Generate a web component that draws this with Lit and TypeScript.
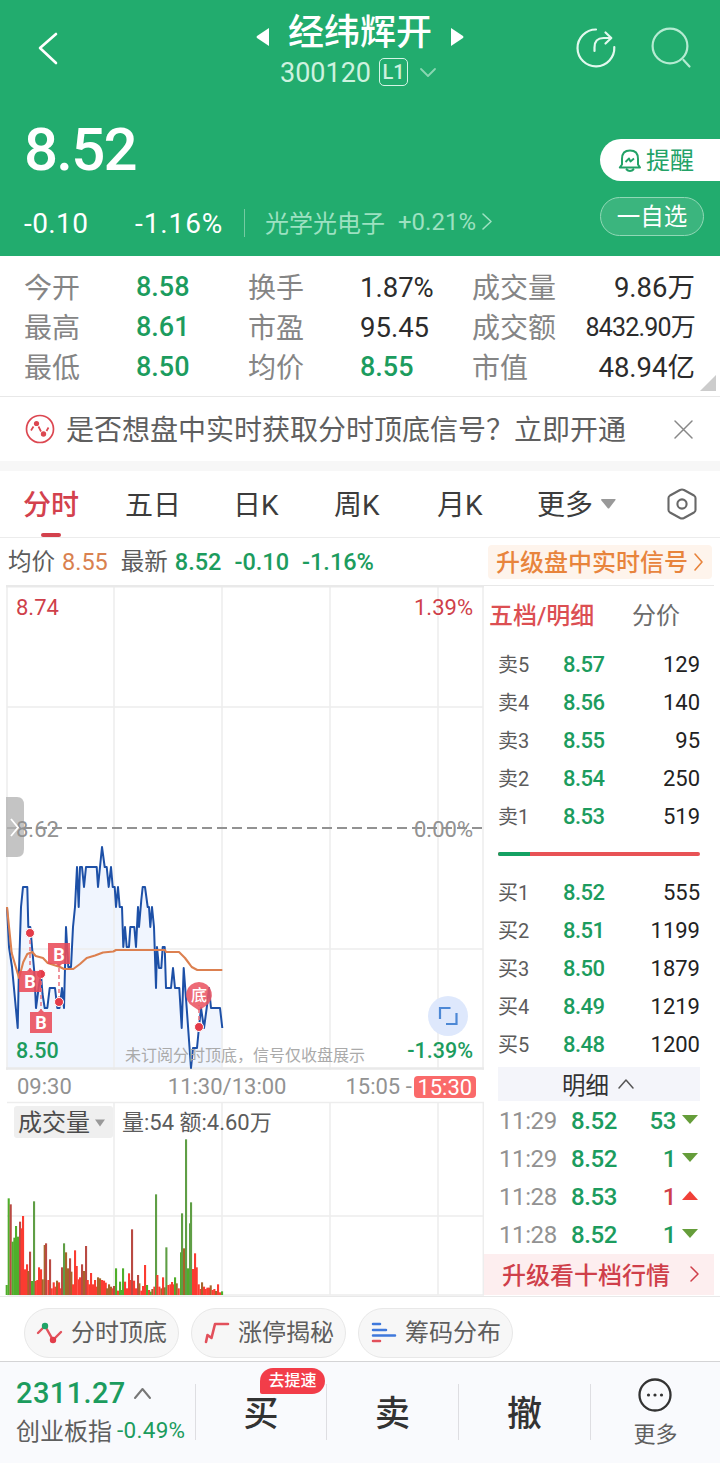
import { LitElement, html, svg, css } from "lit";
import { customElement } from "lit/decorators.js";

const GREEN = "#1c9c5e";
const RED = "#cf3f4a";

const STATS = [
  ["今开", "8.58", "up", "换手", "1.87%", "", "成交量", "9.86万", ""],
  ["最高", "8.61", "up", "市盈", "95.45", "", "成交额", "8432.90万", "tight"],
  ["最低", "8.50", "up", "均价", "8.55", "up", "市值", "48.94亿", ""],
];
const SELLS = [["卖5", "8.57", "129"], ["卖4", "8.56", "140"], ["卖3", "8.55", "95"], ["卖2", "8.54", "250"], ["卖1", "8.53", "519"]];
const BUYS = [["买1", "8.52", "555"], ["买2", "8.51", "1199"], ["买3", "8.50", "1879"], ["买4", "8.49", "1219"], ["买5", "8.48", "1200"]];
const TRADES = [["11:29", "8.52", "53", "down"], ["11:29", "8.52", "1", "down"], ["11:28", "8.53", "1", "rise"], ["11:28", "8.52", "1", "down"]];

const PRICE =
  "7,907 9,947 12,967 17.7,1028 18.7,980 21,907 23,887 27.3,887 28.3,927 30.3,927 32,947 34.3,972 36,1008 39,985 41,974 42.5,994 44.7,1008 47.3,1008 49.7,988 55,988 57.3,1008 59.5,1008 62,988 64,1008 66,927 68.3,967 71,967 73,927 75,907 77,867 78.7,907 80,867 82,867 84,887 86,867 96.7,867 98,887 100,867 102,847 104.7,867 106.7,867 108.7,887 111,867 112.7,887 114.7,887 116,907 118,887 119.7,907 122,907 123.3,947 125,927 126.7,947 129,947 130.3,927 134.3,927 136,947 138,907 139,927 141.3,900 142.7,887 145,887 147.7,907 149,907 150.3,927 152,907 154,927 156,988 157,947 159,968 161.3,968 162.7,947 164.7,947 166,988 171,988 173,968 175,988 179.3,988 181.7,1028 183.7,968 186.7,1008 191,1068 193,1048 197,1048 199,1027 201,1008 204,1028 206.7,1008 209,988 211,1008 220,1008 222.3,1028";
const AVERAGE =
  "7,907 11.7,953 19,978 23.3,962 27.3,954 32.3,952 35.7,956 43,958 47.7,963 60,967 64,969 73.3,969 80,964 86.7,958 95,955.5 103,952.5 113.3,951.5 116,950 165,950 166,952 179,952 185,958 188,962 191.7,967 197.3,970 222.3,970";

// [offset, bar height, colour key], in thirds of a pixel
const VOLUME: [number, number, string][] = (
  "20,30g 26,290g 32,272m 38,160g 43,172g 48,207g 54,175g 60,220m 65,200r 69,237r 75,77r 81,92r 85,72b 90,130m 96,42g 102,281g 107,42r 112,45r 117,83r 123,77r 128,47b 134,150b 138,155m 145,45r 150,107m 155,20r 161,38r 166,25r 171,43b 177,38r 182,20r 186,83m 192,155g 198,128b 204,80b 210,110m 214,70b 219,32r 225,134r 230,87r 236,47r 240,53r 246,92m 252,72b 258,147m 263,45r 268,32r 273,66r 279,32r 285,45r 290,25r 294,53b 300,50b 306,45r 312,43r 317,37r 321,20b 327,32b 333,25b 338,20r 342,27m 348,80g 354,13r 360,40g 364,15g 369,80g 375,40r 381,20r 387,65r 391,45r 396,197m 402,43r 408,20r 414,60m 418,35b 424,13r 429,27r 435,90r 441,30g 447,15r 452,10g 457,18b 463,25r 468,302g 472,60r 478,25r 484,20b 489,53r 494,23b 499,143g 505,30r 511,32r 516,39r 521,32r 525,53g 530,35b 536,20r 543,128g 546,245g 552,140b 558,467g 564,80g 570,215g 573,278g 579,78r 585,125r 590,83r 596,32r 602,18r 606,38b 612,25r 617,18r 622,22r 627,22r 632,29b 638,15r 643,18r 648,12b 654,32r 660,8r 666,11g"
).split(" ").map((s) => {
  const [x, rest] = s.split(",");
  return [Number(x), parseInt(rest, 10), rest.slice(-1)];
});
const BAR: Record<string, string> = { g: "#4fae2b", r: "#fb3b31", m: "#b94a43", b: "#a5652a" };

const signal = (x: number, y: number, tipUp: boolean) => svg`
  <path d=${tipUp ? `M${x - 11} ${y - 10}h8l3 -3l3 3h8v21h-22z` : `M${x - 11} ${y - 11}h22v21h-8l-3 3l-3 -3h-8z`} fill="#e94b59" fill-opacity=".88"/>
  <text x=${x} y=${y + 7} class="badge">B</text>`;

@customElement("app-root")
export class AppRoot extends LitElement {
  static styles = css`
    :host {
      display: block; width: 720px; height: 1463px; overflow: hidden; background: #fff; color: #333;
      font-family: Roboto, "Noto Sans CJK SC", sans-serif; white-space: nowrap;
    }
    * { box-sizing: border-box; }
    svg { display: block; flex: none; overflow: visible; }
    .row { display: flex; align-items: center; }
    .up, .down { color: #1c9c5e; }
    .rise { color: #cf3f4a; }
    header { height: 256px; background: #22ac6e; color: #fff; }
    .top { display: grid; grid-template-columns: 200px 320px 200px; height: 96px; }
    .back { padding: 32px 0 0 37px; }
    .title { display: flex; flex-direction: column; align-items: center; padding-top: 8px; }
    .name { gap: 18px; font-size: 36px; font-weight: 500; line-height: 50px; height: 48px; }
    .name span { padding-top: 2px; }
    .name svg { margin-top: 9px; }
    .code { height: 34px; font-size: 27px; color: #cdf2df; padding-right: 4px; margin-top: -1px; }
    .code > span:first-child { padding-top: 2px; }
    .level { width: 29px; height: 28px; border: 1.5px solid #d5f5e5; border-radius: 5px; font-size: 20px; font-weight: 500; line-height: 26px; text-align: center; margin: 0 12px 0 8px; }
    .icons { display: flex; gap: 35px; padding: 27px 0 0 56px; }
    .mid { display: flex; justify-content: space-between; height: 100px; }
    .price { font-size: 60px; font-weight: 500; line-height: 72px; padding: 18px 0 0 24px; letter-spacing: -1.8px; }
    .remind { width: 120px; height: 42px; margin-top: 43px; background: #fff; color: #22a267; border-radius: 21px 0 0 21px; font-size: 24px; padding-left: 18px; gap: 4px; }
    .remind span { margin-top: -3px; }
    .low { height: 54px; font-size: 28px; }
    .low .chg { width: 111px; padding-left: 24px; letter-spacing: .4px; }
    .low .pct { width: 109px; padding-left: 24px; letter-spacing: .9px; }
    .sep { width: 1px; height: 28px; background: #74cba2; margin-left: 24px; }
    .sector { font-size: 24px; color: #9de1c1; margin: -4px 0 0 20px; width: 228px; gap: 6px; }
    .sector b { font-weight: 400; margin: 2px 0 0 7px; }
    .watch { width: 104px; height: 39px; margin: -13px 0 0 107px; border: 1.5px solid #91d8b6; border-radius: 20px; background: #3bb57e; font-size: 23.5px; justify-content: center; padding-bottom: 3px; }
    .stats { height: 140px; padding: 12px 25px 8px 24px; position: relative; }
    .stat { display: grid; grid-template-columns: 112px 112px 112px 112px 83px 140px; height: 40px; line-height: 41px; font-size: 28px; }
    .stat i { font-style: normal; color: #858585; }
    .stat span { font-size: 27.5px; line-height: 39px; color: #2c2c2c; }
    .stat span.up { color: #1c9c5e; font-weight: 500; font-size: 27px; }
    .stat span:last-child { text-align: right; }
    .stat span.tight { font-size: 25px; letter-spacing: -.8px; }
    .fold { position: absolute; right: 4px; bottom: 5px; }
    .notice { height: 65px; border-top: 1.5px solid #e8e8e8; padding: 0 27px 0 25px; font-size: 28px; color: #5f5f5f; }
    .notice span { margin: -2px auto 0 11px; }
    .gap { height: 10px; background: #f7f7f7; }
    .tabs { height: 67px; border-bottom: 1.5px solid #ececec; font-size: 28px; color: #3c3c3c; position: relative; }
    .tabs span { line-height: 66px; padding-top: 3px; }
    .tabs .on { color: #d3414d; font-weight: 500; width: 102px; margin-left: 23px; }
    .tabs .on::after { content: ""; position: absolute; left: 41px; bottom: 0; width: 20px; height: 4px; border-radius: 2px; background: #d3414d; }
    .w108 { width: 108px; } .w101 { width: 101px; } .w103 { width: 103px; } .w100 { width: 100px; }
    .caret { margin: 0 51px 0 8px; }
    .quote { height: 47px; font-size: 23.5px; color: #5c5c5c; padding: 0 8px 0 8px; }
    .quote span { margin-right: 13px; font-weight: 500; }
    .quote .avg { color: #d98150; font-weight: 400; }
    .quote em { font-style: normal; margin: -3px 7px 0 0; }
    .promo { margin-left: auto; width: 224px; height: 34px; background: #fef4ec; border-radius: 4px; color: #e8843c; font-size: 24px; font-weight: 500; gap: 6px; padding: 0 0 3px 8px; }
    .promo svg { margin-top: 3px; }
    .main { display: grid; grid-template-columns: 484px 236px; height: 711px; }
    .axis { height: 30px; font-size: 22px; color: #929292; padding: 0 0 1px 17px; }
    .axis .b { margin-left: 96px; }
    .axis .c { margin-left: 59px; }
    .axis .d { background: #fa6a6a; color: #fff; border-radius: 4px; height: 22px; line-height: 23px; width: 62px; text-align: center; margin-left: 2px; }
    svg text { font-size: 22px; font-family: Roboto, "Noto Sans CJK SC", sans-serif; }
    svg .green { font-size: 21.5px; font-weight: 500; }
    svg .badge { font-size: 18px; font-weight: 700; fill: #fff; text-anchor: middle; }
    svg .bottom { font-size: 16px; font-weight: 500; fill: #fff; text-anchor: middle; }
    svg .watermark { font-size: 16px; fill: #aaa; }
    svg .kind { font-size: 24px; fill: #4c4c4c; }
    .book { border-top: 1.5px solid #e8e8e8; width: 230px; }
    .head { height: 60px; font-size: 24px; padding: 0 0 5px 5px; color: #6c6c6c; }
    .head b { color: #dc4f52; font-weight: 500; width: 143px; }
    .level-row { display: grid; grid-template-columns: 65px 70px 67px; height: 38px; line-height: 38px; padding-left: 14px; font-size: 22px; }
    .level-row span { font-weight: 500; letter-spacing: -.5px; }
    .level-row i { font-style: normal; font-size: 20px; color: #5c5c5c; }
    .level-row em { font-style: normal; text-align: right; color: #222; }
    .ratio { display: flex; width: 202px; height: 4px; margin: 16px 0 18px 14px; border-radius: 2px; overflow: hidden; background: #e85255; }
    .ratio div { width: 32px; background: #14a163; }
    .detail { width: 202px; height: 34px; margin: 3px 0 1px 14px; background: #f4f5fa; font-size: 23.5px; justify-content: center; gap: 9px; padding: 0 2px 0 0; }
    .trade { display: grid; grid-template-columns: 72px 56px 49px 16px; height: 38px; line-height: 38px; align-items: center; padding-left: 15px; font-size: 24px; }
    .trade span, .trade em { font-weight: 500; letter-spacing: -.4px; }
    .trade i { font-style: normal; color: #929292; letter-spacing: -.4px; }
    .trade em { font-style: normal; text-align: right; }
    .trade svg { margin: -4px 0 0 6px; }
    .ten { height: 41px; background: #fdeeef; color: #cf3f4a; font-size: 24px; font-weight: 500; padding: 0 0 2px 18px; gap: 20px; }
    .chips { height: 65px; border-top: 1.5px solid #e9e9e9; padding: 11px 0 2px 24px; gap: 12px; align-items: flex-start; }
    .chip { width: 155px; height: 50px; border: 1.5px solid #e8e8e8; border-radius: 25px; background: #f7f7f7; font-size: 24px; color: #5e5e5e; padding-left: 11px; gap: 8px; }
    .chip span { margin-top: -5px; }
    .dock { height: 102px; background: #f9fafd; border-top: 1.5px solid #d4d4d6; display: grid; grid-template-columns: 195px 131px 132px 132px 130px; align-items: start; }
    .index { padding: 12px 0 0 16px; font-size: 24px; color: #5f5f5f; }
    .index .row:first-child { height: 38px; font-size: 29px; font-weight: 500; gap: 8px; letter-spacing: .4px; }
    .index .row:last-child { height: 34px; }
    .index b { font-weight: 400; font-size: 22.5px; color: #1c9c5e; margin: 2px 0 0 5px; letter-spacing: .3px; }
    .act { position: relative; height: 56px; margin-top: 22px; border-left: 1.5px solid #dedee2; text-align: center; font-size: 35px; font-weight: 500; line-height: 61px; }
    .tag { position: absolute; left: 64px; top: -16px; width: 65px; height: 26px; border-radius: 13px 13px 13px 2px; background: #f23d49; color: #fff; font-size: 16px; line-height: 25px; }
    .more { height: 56px; margin-top: 22px; border-left: 1.5px solid #dedee2; display: flex; justify-content: center; }
    .more div { margin-top: -6px; display: flex; flex-direction: column; align-items: center; font-size: 22px; color: #5f5f5f; line-height: 34px; gap: 6px; }
  `;

  chevron(d: string, color: string, w: number, h: number, sw = 1.6) {
    return html`<svg width=${w} height=${h} viewBox="0 0 ${w} ${h}"><path d=${d} fill="none" stroke=${color} stroke-width=${sw} stroke-linecap="round" stroke-linejoin="round" /></svg>`;
  }

  header() {
    return html`<header>
      <div class="top">
        <div class="back">${this.chevron("M19 2L3 16L19 31", "#fff", 22, 33, 2.6)}</div>
        <div class="title">
          <div class="row name">
            <svg width="14" height="18" viewBox="0 0 14 18"><path d="M13 0V18L1 10Q0 9 1 8Z" fill="#fff" /></svg>
            <span>经纬辉开</span>
            <svg width="14" height="18" viewBox="0 0 14 18"><path d="M1 0V18L13 10Q14 9 13 8Z" fill="#fff" /></svg>
          </div>
          <div class="row code"><span>300120</span><span class="level">L1</span>${this.chevron("M1 1L8 8L15 1", "#8ad6b2", 16, 9, 1.8)}</div>
        </div>
        <div class="icons">
          <svg width="41" height="42" viewBox="0 0 41 42" fill="none" stroke="#e2f9ee" stroke-width="2.2" stroke-linecap="round" stroke-linejoin="round">
            <path d="M20 2.5A18.4 18.4 0 1 0 38.3 20" />
            <path d="M18.5 24V20.5Q18.5 11 27.5 11H34.5M29.5 5.5L35.3 11L29.5 16.5" />
          </svg>
          <svg width="42" height="42" viewBox="0 0 42 42" fill="none" stroke="#b5ebd2" stroke-width="2.2" stroke-linecap="round">
            <circle cx="18" cy="19" r="17.4" /><path d="M31.5 33L37.5 39.5" />
          </svg>
        </div>
      </div>
      <div class="mid">
        <div class="price">8.52</div>
        <div class="row remind">
          <svg width="24" height="24" viewBox="0 0 24 24" fill="none" stroke="#22a267" stroke-width="2" stroke-linejoin="round">
            <path d="M1.8 19.5H22L20 16.5V11Q20 2.6 12 2.6Q4 2.6 4 11V16.5ZM8 21Q12 25 16 21" /><path d="M7.5 14L11 10.5L12.5 13.5L16 10.5" stroke-width="1.8" />
          </svg><span>提醒</span></div>
      </div>
      <div class="row low">
        <span class="chg">-0.10</span><span class="pct">-1.16%</span><div class="sep"></div>
        <div class="row sector"><span>光学光电子</span><b>+0.21%</b>${this.chevron("M1 1L9 8.5L1 16", "#9de1c1", 10, 17)}</div>
        <div class="row watch">一自选</div>
      </div>
    </header>`;
  }

  priceChart() {
    return html`<svg width="484" height="487" viewBox="0 585 484 487">
      <polygon points="7,1068 ${PRICE} 222.3,1068" fill="#f0f5fe" />
      <g stroke="#ededed" stroke-width="1.5" fill="none">
        <path d="M114 586V1070M222 586V1070M330 586V1070M438 586V1070M7 707H483M7 949H483M7 586V1070M483 586V1070" />
        <path d="M6 586.2H484M6 1068.5H484" stroke="#e9e9e9" stroke-width="2.5" />
      </g>
      <path d="M7 828H483" stroke="#929292" stroke-width="1.8" stroke-dasharray="10 5" />
      <polyline points=${PRICE} fill="none" stroke="#1d50a7" stroke-width="2" stroke-linejoin="round" />
      <polyline points=${AVERAGE} fill="none" stroke="#dc8050" stroke-width="2.1" stroke-linejoin="round" />
      <g stroke="#ec7b86" stroke-width="1.6" stroke-dasharray="4 3"><path d="M30 933V972M41 974V1010M59 1000V964M199 1027V1005" /></g>
      <g fill="#e43b49" stroke="#fff" stroke-width="1"><circle cx="30" cy="933" r="4.5" /><circle cx="41" cy="974" r="4.5" /><circle cx="59" cy="1002" r="4.5" /><circle cx="199" cy="1027" r="4.5" /></g>
      ${signal(59, 954, false)}${signal(30, 981, true)}${signal(41, 1022, true)}
      <path d="M199 982a13 13 0 0 1 6 24.5l-6 4l-6 -4a13 13 0 0 1 6 -24.5z" fill="#ea5563" fill-opacity=".88" />
      <text x="199" y="1001" class="bottom">底</text>
      <path d="M6 797H17Q24 797 24 805V849Q24 857 17 857H6Z" fill="#b4b4b4" fill-opacity=".78" />
      <text x="16" y="837" fill="#929292">8.62</text><text x="473" y="837" text-anchor="end" fill="#929292">0.00%</text>
      <path d="M11 819L18 827.5L11 836" fill="none" stroke="#fff" stroke-width="1.8" />
      <text x="16" y="615" fill=${RED}>8.74</text><text x="473" y="615" text-anchor="end" fill=${RED}>1.39%</text>
      <text x="16" y="1058" fill=${GREEN} class="green">8.50</text><text x="473" y="1058" text-anchor="end" fill=${GREEN} class="green">-1.39%</text>
      <text x="125" y="1061" class="watermark">未订阅分时顶底，信号仅收盘展示</text>
      <circle cx="448" cy="1016" r="20" fill="#dce7fc" fill-opacity=".95" />
      <path d="M440 1019V1008H450.5M456.5 1013V1024H446" fill="none" stroke="#4d88d5" stroke-width="2.2" />
    </svg>`;
  }

  volumeChart() {
    return html`<svg width="484" height="194" viewBox="0 1102 484 194">
      <path d="M7 1102.5H484M7 1216H484M7 1295H484M114 1102V1295M222 1102V1295M330 1102V1295M438 1102V1295M483.3 1102V1295" fill="none" stroke="#ededed" stroke-width="1.5" />
      <rect x="14" y="1106" width="99" height="32" rx="3" fill="#efefef" />
      <text x="18" y="1130.5" class="kind">成交量</text><path d="M95 1119.5H105L100 1126.5Z" fill="#999" />
      <text x="122" y="1130" fill="#5c5c5c">量:54 额:4.60万</text>
      ${VOLUME.map(([x, h, k]) => svg`<rect x=${x / 3 - 1} y=${1295 - h / 3} width="2.1" height=${h / 3} fill=${h > 140 && k === "g" && x > 90 ? "#5f9e45" : BAR[k]} />`)}
    </svg>`;
  }

  bookRow(r: string[]) {
    return html`<div class="level-row"><i>${r[0]}</i><span class="up">${r[1]}</span><em>${r[2]}</em></div>`;
  }

  render() {
    return html`
      ${this.header()}
      <div class="stats">
        ${STATS.map((r) => html`<div class="stat"><i>${r[0]}</i><span class=${r[2]}>${r[1]}</span><i>${r[3]}</i><span class=${r[5]}>${r[4]}</span><i>${r[6]}</i><span class=${r[8]}>${r[7]}</span></div>`)}
        <svg class="fold" width="16" height="16" viewBox="0 0 16 16"><path d="M16 0V16H0Z" fill="#ccc" /></svg>
      </div>
      <div class="row notice">
        <svg width="30" height="30" viewBox="0 0 30 30" fill="none" stroke="#dc4751" stroke-width="1.7">
          <circle cx="15" cy="15" r="13.5" /><path d="M6 16.5L8.5 12.5M13.5 12.5L16 17.5M21.5 17L23.5 13.5" /><circle cx="11.5" cy="9.5" r="2.6" fill="#dc4751" stroke="none" /><circle cx="18.5" cy="20" r="2.7" fill="#dc4751" stroke="none" />
        </svg>
        <span>是否想盘中实时获取分时顶底信号？立即开通</span>
        ${this.chevron("M1 1L18 18M18 1L1 18", "#888", 19, 19, 1.5)}
      </div>
      <div class="gap"></div>
      <div class="row tabs">
        <span class="on">分时</span><span class="w108">五日</span><span class="w101">日K</span><span class="w103">周K</span><span class="w100">月K</span><span>更多</span>
        <svg class="caret" width="15" height="10" viewBox="0 0 15 10"><path d="M1 0H14Q15 0 14.5 1L8 9.5H7L0 1Q0 0 1 0Z" fill="#999" /></svg>
        <svg width="30" height="32" viewBox="0 0 30 32" fill="none" stroke="#686868" stroke-width="2.1" stroke-linejoin="round"><path d="M13 2Q15 1 17 2L27 7.5Q28.5 8.5 28.5 10V22Q28.5 23.5 27 24.5L17 30Q15 31 13 30L3 24.5Q1.5 23.5 1.5 22V10Q1.5 8.5 3 7.5Z" /><circle cx="15" cy="16" r="4.6" /></svg>
      </div>
      <div class="row quote">
        <em>均价</em><span class="avg">8.55</span><em>最新</em><span class="up">8.52</span><span class="up">-0.10</span><span class="up">-1.16%</span>
        <div class="row promo">升级盘中实时信号${this.chevron("M1 1L8 9L1 17", "#e8843c", 9, 18)}</div>
      </div>
      <div class="main">
        <div>
          ${this.priceChart()}
          <div class="row axis"><span>09:30</span><span class="b">11:30/13:00</span><span class="c">15:05 -</span><span class="d">15:30</span></div>
          ${this.volumeChart()}
        </div>
        <div class="book">
          <div class="row head"><b>五档/明细</b><span>分价</span></div>
          ${SELLS.map((r) => this.bookRow(r))}
          <div class="ratio"><div></div></div>
          ${BUYS.map((r) => this.bookRow(r))}
          <div class="row detail">明细${this.chevron("M1 9L8 1L15 9", "#555", 16, 10, 1.5)}</div>
          ${TRADES.map((r) => html`<div class="trade"><i>${r[0]}</i><span class="up">${r[1]}</span><em class=${r[3]}>${r[2]}</em>
            <svg width="16" height="9" viewBox="0 0 16 9"><path d=${r[3] === "down" ? "M0 0H16L8 9Z" : "M0 9H16L8 0Z"} fill=${r[3] === "down" ? "#659d3a" : "#f04038"} /></svg></div>`)}
          <div class="row ten">升级看十档行情${this.chevron("M1 1L8 8L1 15", "#cf3f4a", 9, 16, 1.5)}</div>
        </div>
      </div>
      <div class="row chips">
        <div class="row chip">
          <svg width="27" height="22" viewBox="0 0 27 22" fill="none" stroke-width="2.4" stroke-linecap="round"><path d="M2 11L9 4L17 18L25 10" stroke="#e2525c" /><circle cx="9" cy="4" r="3.2" fill="#1fa467" /><circle cx="17" cy="18" r="3.2" fill="#e23d4a" /></svg><span>分时顶底</span></div>
        <div class="row chip">
          <svg width="27" height="22" viewBox="0 0 27 22" fill="none" stroke="#e2505b" stroke-width="2.6" stroke-linecap="round" stroke-linejoin="round"><path d="M3 20L4.5 13L8.5 16L12 2H25" /></svg><span>涨停揭秘</span></div>
        <div class="row chip">
          <svg width="27" height="22" viewBox="0 0 27 22" fill="none" stroke="#3f79dc" stroke-width="2.5" stroke-linecap="round"><path d="M3 2H10M3 8H16M3 13.5H25" /><path d="M3 19H10" stroke="#e2505b" /></svg><span>筹码分布</span></div>
      </div>
      <div class="dock">
        <div class="index">
          <div class="row up">2311.27${this.chevron("M1 10L8.5 1L16 10", "#777", 17, 11, 2)}</div>
          <div class="row">创业板指<b>-0.49%</b></div>
        </div>
        <div class="act">买<div class="tag">去提速</div></div>
        <div class="act">卖</div>
        <div class="act">撤</div>
        <div class="more"><div>
          <svg width="34" height="34" viewBox="0 0 34 34"><circle cx="17" cy="17" r="15.5" fill="none" stroke="#333" stroke-width="2.3" /><g fill="#333"><circle cx="10.5" cy="17" r="1.6" /><circle cx="17" cy="17" r="1.6" /><circle cx="23.5" cy="17" r="1.6" /></g></svg>
          更多</div></div>
      </div>`;
  }
}
